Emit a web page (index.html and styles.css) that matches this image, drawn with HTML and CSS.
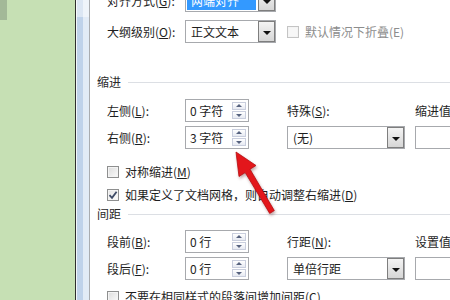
FILE: index.html
```html
<!DOCTYPE html>
<html lang="zh-CN">
<head>
<meta charset="utf-8">
<title>段落</title>
<link rel="stylesheet" href="styles.css">
</head>
<body>
<div class="screen">
  <div class="side"><div class="side-tab"></div></div>
  <div class="frame"></div>
  <div class="dialog">
    <div class="content">
      <div class="top-row">
        <span class="label">对齐方式(<u>G</u>):</span>
        <div class="select sel-top selected"><span class="val">两端对齐</span><span class="btn"></span></div>
      </div>
      <div class="top-row">
        <span class="label">大纲级别(<u>O</u>):</span>
        <div class="select sel-top"><span class="val">正文文本</span><span class="btn"></span></div>
        <div class="check disabled"><span class="box"></span><span>默认情况下折叠(E)</span></div>
      </div>

      <div class="section">缩进</div>
      <div class="grid">
        <span class="label">左侧(<u>L</u>):</span>
        <div class="spin"><span class="val">0 字符</span><span class="arrows"><span class="up"></span><span class="down"></span></span></div>
        <span class="label">特殊(<u>S</u>):</span>
        <span class="label">缩进值(<u>Y</u>):</span>

        <span class="label">右侧(<u>R</u>):</span>
        <div class="spin"><span class="val">3 字符</span><span class="arrows"><span class="up"></span><span class="down"></span></span></div>
        <div class="select sel-wide"><span class="val">(无)</span><span class="btn"></span></div>
        <div class="textbox"></div>
      </div>
      <div class="checks first">
        <div class="check"><span class="box"></span><span>对称缩进(<u>M</u>)</span></div>
        <div class="check"><span class="box checked"><svg viewBox="0 0 10 10" width="10" height="10"><path d="M1.5 5.2 L4 7.8 L8.6 1.8" fill="none" stroke="#3d4a66" stroke-width="1.8"/></svg></span><span>如果定义了文档网格，则自动调整右缩进(<u>D</u>)</span></div>
      </div>

      <div class="section">间距</div>
      <div class="grid grid-space">
        <span class="label">段前(<u>B</u>):</span>
        <div class="spin"><span class="val">0 行</span><span class="arrows"><span class="up"></span><span class="down"></span></span></div>
        <span class="label">行距(<u>N</u>):</span>
        <span class="label">设置值(<u>A</u>):</span>

        <span class="label">段后(<u>F</u>):</span>
        <div class="spin"><span class="val">0 行</span><span class="arrows"><span class="up"></span><span class="down"></span></span></div>
        <div class="select sel-wide"><span class="val">单倍行距</span><span class="btn"></span></div>
        <div class="textbox"></div>
      </div>
      <div class="checks last">
        <div class="check"><span class="box"></span><span>不要在相同样式的段落间增加间距(<u>C</u>)</span></div>
      </div>
    </div>
  </div>
  <svg class="arrow" viewBox="0 0 450 300" width="450" height="300">
    <polygon points="236,152 256,165.5 250,169.2 274.3,210.6 269.7,213.4 245.2,172.6 239,176.5" fill="#e3161b" stroke="#b80d10" stroke-width="0.8" stroke-linejoin="round"/>
  </svg>
</div>
</body>
</html>
```
FILE: styles.css
```css
* { box-sizing: border-box; }
html, body { margin: 0; padding: 0; }
body {
  width: 450px;
  height: 300px;
  overflow: hidden;
  background: #ffffff;
  font-family: "Noto Sans CJK SC", "Noto Sans", sans-serif;
  font-size: 12px;
  color: #1e1e1e;
}
u { text-decoration: underline; text-underline-offset: 1px; }

.screen {
  position: relative;
  display: flex;
  width: 450px;
  height: 300px;
}
.side {
  width: 75px;
  flex: none;
  background: #c6e0b4;
}
.side-tab {
  width: 7px;
  height: 20px;
  background: #a3b998;
}
.frame {
  width: 15px;
  flex: none;
  border-left: 1px solid #2e2e2e;
  border-right: 1px solid #a9acb0;
  background:
    linear-gradient(to bottom, rgba(255,255,255,0.45) 0 17px, rgba(255,255,255,0) 17px),
    linear-gradient(to right, #f3f6fa 0 1px, #bfd2ea 1px 7px, #e2ebf6 7px 13px);
}
.dialog {
  flex: 1;
  min-width: 0;
  overflow: hidden;
  background: #ffffff;
  padding-left: 7px;
}
.content { margin-top: -11px; }

.label {
  display: flex;
  align-items: center;
  line-height: 16px;
  white-space: nowrap;
}
.top-row {
  display: flex;
  align-items: center;
  height: 23px;
  padding-left: 10px;
  margin-bottom: 8px;
}
.top-row .label { width: 78px; flex: none; }

.select {
  display: flex;
  align-items: stretch;
  height: 23px;
  border: 1px solid #a7a9ad;
  background: #fff;
  flex: none;
}
.sel-top { width: 91px; }
.sel-wide { width: 118px; }
.select .val {
  flex: 1;
  display: flex;
  align-items: center;
  padding-left: 4px;
  white-space: nowrap;
  margin: 1px 2px 1px 1px;
}
.selected .val {
  background: #3399ff;
  color: #ffffff;
}
.select .btn {
  position: relative;
  width: 17px;
  flex: none;
  border: 1px solid #7e7e7e;
  background: linear-gradient(#f4f4f4, #d6d6d6);
}
.select .btn::after {
  content: "";
  position: absolute;
  left: 50%;
  top: 50%;
  margin-left: -4px;
  margin-top: -1px;
  border-left: 4px solid transparent;
  border-right: 4px solid transparent;
  border-top: 4px solid #111;
}

.check {
  display: flex;
  align-items: center;
  gap: 6px;
  height: 23px;
  white-space: nowrap;
}
.top-row .check { margin-left: 11px; }
.check .box {
  width: 12px;
  height: 12px;
  flex: none;
  border: 1px solid #8e8f8f;
  background: linear-gradient(135deg, #dcdcdc, #fbfbfb);
  box-shadow: inset 0 0 0 1px #f4f4f4;
  display: flex;
  align-items: center;
  justify-content: center;
}
.check .box.checked { background: linear-gradient(135deg, #e4e4e4, #fdfdfd); }
.check.disabled { color: #8d8d8d; }
.check.disabled .box { border-color: #c4c4c4; background: #f7f7f7; }

.section {
  display: flex;
  align-items: center;
  gap: 7px;
  height: 16px;
  line-height: 16px;
  color: #2a2a2a;
  margin-top: 31px;
}
.section::after {
  content: "";
  flex: 1;
  height: 1px;
  background: #dcdfe4;
}

.grid {
  display: grid;
  grid-template-columns: 78px 102px 128px 60px;
  grid-auto-rows: 23px;
  row-gap: 4px;
  padding-left: 10px;
  margin-top: 9px;
}
.grid-space { margin-top: 8px; }

.spin {
  display: flex;
  width: 64px;
  height: 23px;
  border: 1px solid #a7a9ad;
  background: #fff;
}
.spin .val {
  flex: 1;
  display: flex;
  align-items: center;
  padding-left: 4px;
  white-space: nowrap;
}
.spin .arrows {
  display: flex;
  flex-direction: column;
  gap: 1px;
  width: 14px;
  margin: 2px 2px 2px 0;
}
.spin .up, .spin .down {
  position: relative;
  flex: 1;
  border: 1px solid #c9cedd;
  background: linear-gradient(#ffffff, #e7eaf2);
}
.spin .up::after, .spin .down::after {
  content: "";
  position: absolute;
  left: 50%;
  top: 50%;
  margin-left: -3px;
  border-left: 3px solid transparent;
  border-right: 3px solid transparent;
}
.spin .up::after { margin-top: -2px; border-bottom: 3px solid #56627f; }
.spin .down::after { margin-top: -1px; border-top: 3px solid #56627f; }

.textbox {
  height: 23px;
  border: 1px solid #a7a9ad;
  border-right: none;
  background: #fff;
}

.checks { padding-left: 10px; }
.checks.first { margin-top: 11px; }
.checks.last { margin-top: 5px; }
.checks + .section { margin-top: 0; }

.arrow {
  position: absolute;
  left: 0;
  top: 0;
  pointer-events: none;
  filter: drop-shadow(1px 2px 1.5px rgba(80, 0, 0, 0.35));
}
```
